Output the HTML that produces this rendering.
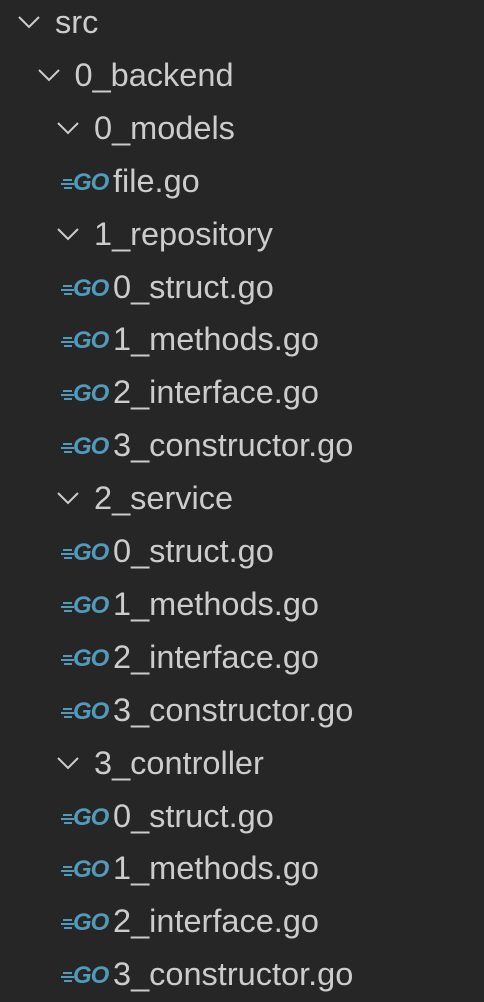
<!DOCTYPE html><html><head><style>
html,body{margin:0;padding:0;background:#262626;width:484px;height:1000px;overflow:hidden}
.r{position:absolute;height:53px;line-height:53px;font-family:"Liberation Sans",sans-serif;font-size:32.5px;color:#cccccc;white-space:nowrap}
.c{position:absolute;top:14px;width:24px;height:24px}
.g{position:absolute;top:0}
.g i{position:absolute;left:0;height:2px;background:#519aba}
.g b{position:absolute;left:12px;top:1px;font-family:"Liberation Sans",sans-serif;font-style:italic;font-weight:bold;font-size:24px;color:#519aba;letter-spacing:-1px;line-height:53px}
</style></head><body>
<div id="t"></div>
<script>
var rows=[[0,'src',1],[1,'0_backend',1],[2,'0_models',1],[3,'file.go',0],[2,'1_repository',1],[3,'0_struct.go',0],[3,'1_methods.go',0],[3,'2_interface.go',0],[3,'3_constructor.go',0],[2,'2_service',1],[3,'0_struct.go',0],[3,'1_methods.go',0],[3,'2_interface.go',0],[3,'3_constructor.go',0],[2,'3_controller',1],[3,'0_struct.go',0],[3,'1_methods.go',0],[3,'2_interface.go',0],[3,'3_constructor.go',0]];
var h='';
rows.forEach(function(r,i){
var top=Math.round(-4+i*52.9);
if(r[2]){var cx=17+r[0]*19.5,tx=55+r[0]*19.5;
h+='<div class="r" style="top:'+top+'px;left:0;width:484px"><svg class="c" style="left:'+cx+'px" viewBox="0 0 24 24"><path d="M2 7 L12 17 L22 7" fill="none" stroke="#cccccc" stroke-width="2"/></svg><span style="position:absolute;left:'+tx+'px">'+r[1]+'</span></div>';}
else{h+='<div class="r" style="top:'+top+'px;left:0;width:484px"><div class="g" style="left:61px;width:44px;height:53px"><i style="top:24px;width:9px;left:2px"></i><i style="top:28px;width:13px"></i><i style="top:32px;width:8px;left:3px"></i><b>GO</b></div><span style="position:absolute;left:113px">'+r[1]+'</span></div>';}
});
document.getElementById('t').innerHTML=h;
</script>
</body></html>
